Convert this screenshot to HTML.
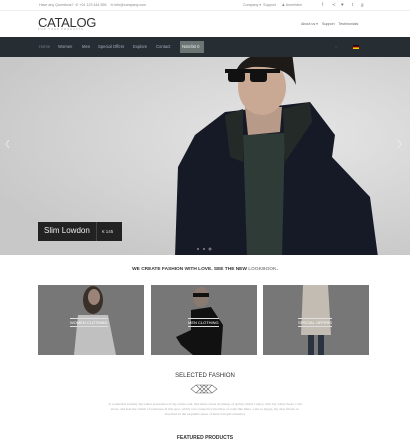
<!DOCTYPE html>
<html><head><meta charset="utf-8"><style>
*{margin:0;padding:0;box-sizing:border-box}
body{width:410px;height:439px;overflow:hidden;background:#fff;font-family:"Liberation Sans",sans-serif;position:relative;color:#444}
.a{position:absolute;white-space:nowrap}
.t{font-size:3.6px;color:#888}
.nav{position:absolute;left:0;top:37px;width:410px;height:20px;background:#262d33}
.nav span{position:absolute;top:7px;font-size:4.2px;color:#aab}
.card{position:absolute;top:285px;width:106px;height:70px;background:#777;overflow:hidden}
.lbl{position:absolute;top:33px;font-size:4px;color:#fff;border-top:.6px solid #ddd;border-bottom:.6px solid #ddd;padding:1px 0;white-space:nowrap}
.so{position:absolute;top:2px;font-size:4.5px;color:#777}
</style></head><body>
<div class="a t" style="left:39px;top:3px">Have any Questions? &nbsp;✆ +01 123 444 555 &nbsp;&nbsp; ✉ info@company.com</div>
<div class="a t" style="left:243px;top:3px">Company ▾ &nbsp;Support &nbsp;&nbsp;&nbsp;&nbsp; ♟ Anmelden</div>
<span class="so" style="left:322px">f</span><span class="so" style="left:332px">≺</span><span class="so" style="left:341px">♥</span><span class="so" style="left:352px">t</span><span class="so" style="left:361px">g</span>
<div style="position:absolute;left:0;top:10px;width:410px;height:.5px;background:#eee"></div>
<div class="a" style="left:38px;top:15px;font-size:13px;color:#333;letter-spacing:-.3px">CATALOG</div>
<div class="a" style="left:38px;top:28px;font-size:2.6px;color:#aaa;letter-spacing:1px">FOR YOUR PRODUCTS</div>
<div class="a t" style="left:301px;top:22px;color:#666">About us ▾ &nbsp;&nbsp; Support &nbsp;&nbsp; Testimonials</div>
<div class="nav">
<span style="left:39px;color:#778">Home</span><span style="left:58px">Women</span><span style="left:82px">Men</span><span style="left:98px">Special Offers</span><span style="left:133px">Explore</span><span style="left:156px">Contact</span>
<div style="position:absolute;left:180px;top:4px;width:24px;height:12px;background:#6c7574"></div><span style="left:182px;color:#eee">Notelist 0</span>
<span style="left:335px;color:#666">○</span>
<div style="position:absolute;left:353px;top:8px;width:6px;height:4px;background:linear-gradient(#111 33%,#c00 33%,#c00 66%,#fc0 66%)"></div>
</div>
<div style="position:absolute;left:0;top:57px;width:410px;height:198px;background:radial-gradient(ellipse at 70% 40%,#e6e6e6,#c8c8c8 80%);overflow:hidden">
<svg width="410" height="198" style="position:absolute;left:0;top:0">
<polygon points="195,78 225,55 310,45 335,78 332,100 370,140 378,200 175,200 178,110" fill="#161926"/>
<polygon points="243,78 285,76 282,200 247,200" fill="#2e3b36"/>
<polygon points="225,58 243,52 243,105 230,100" fill="#232a28"/>
<polygon points="283,52 310,45 312,65 285,105" fill="#232a28"/>
<path d="M245 50 L282 50 L280 75 L248 78Z" fill="#b89a88"/>
<ellipse cx="262" cy="30" rx="24" ry="28" fill="#c9a894"/>
<path d="M236 14 Q245 -8 292 -5 L296 28 Q288 8 252 10Z" fill="#1d1a18"/>
<rect x="225" y="12" width="55" height="4" fill="#111"/>
<rect x="228" y="14" width="17" height="11" rx="3" fill="#111"/>
<rect x="250" y="14" width="17" height="11" rx="3" fill="#111"/>
<path d="M398 83 l3 4 l-3 4" stroke="#eee" fill="none" stroke-width=".8"/>
<path d="M9 83 l-3 4 l3 4" stroke="#eee" fill="none" stroke-width=".8"/>
<circle cx="198" cy="192" r="1" fill="#888"/><circle cx="204" cy="192" r="1" fill="#888"/><circle cx="210" cy="192" r="1.1" fill="none" stroke="#eee" stroke-width=".5"/>
</svg>
<div style="position:absolute;left:38px;top:165px;width:84px;height:19px;background:#222">
<span class="a" style="left:6px;top:4px;font-size:8px;color:#eee">Slim Lowdon</span>
<div style="position:absolute;left:58px;top:0;width:.5px;height:19px;background:#444"></div>
<span class="a" style="left:64px;top:7px;font-size:4.5px;color:#ddd">€ 145</span></div>
</div>
<div class="a" style="left:0;width:410px;text-align:center;top:267px;font-size:4.8px;font-weight:bold;color:#333">WE CREATE FASHION WITH LOVE. SEE THE NEW <span style="color:#888">LOOKBOOK</span>.</div>
<div class="card" style="left:38px"><svg width="106" height="70"><ellipse cx="55" cy="15" rx="10" ry="14" fill="#3a302a"/><ellipse cx="56" cy="12" rx="6" ry="8" fill="#9a8478"/><polygon points="40,30 70,30 78,70 36,70" fill="#c0c0c0"/></svg><div class="lbl" style="left:32px">WOMEN CLOTHING</div></div>
<div class="card" style="left:151px"><svg width="106" height="70"><ellipse cx="50" cy="12" rx="8" ry="10" fill="#8a7a70"/><rect x="42" y="8" width="16" height="4" fill="#111"/><polygon points="40,25 60,22 72,40 70,70 42,70 30,60 25,52 40,45" fill="#111"/></svg><div class="lbl" style="left:37px">MEN CLOTHING</div></div>
<div class="card" style="left:263px"><svg width="106" height="70"><polygon points="40,0 65,0 68,50 38,50" fill="#c2bcb2"/><rect x="45" y="50" width="6" height="20" fill="#2a3440"/><rect x="55" y="50" width="6" height="20" fill="#2a3440"/></svg><div class="lbl" style="left:35px">SPECIAL OFFERS</div></div>
<div class="a" style="left:0;width:410px;text-align:center;top:373px;font-size:6px;color:#333">SELECTED FASHION</div>
<svg class="a" style="left:190px;top:384px" width="28" height="10"><path d="M1 5 L6 1 L22 1 L27 5 L22 9 L6 9Z M6 1 L14 9 M10 1 L18 9 M14 1 L22 9 M6 9 L14 1 M10 9 L18 1 M14 9 L22 1" stroke="#666" stroke-width=".6" fill="none"/></svg>
<div class="a" style="left:0;width:410px;text-align:center;top:402px;font-size:3.5px;line-height:5.2px;color:#aaa;font-family:'Liberation Serif',serif;white-space:normal;padding:0 105px">A wonderful serenity has taken possession of my entire soul, like these sweet mornings of spring which I enjoy with my whole heart. I am alone, and feel the charm of existence in this spot, which was created for the bliss of souls like mine. I am so happy, my dear friend, so absorbed in the exquisite sense of mere tranquil existence</div>
<div class="a" style="left:0;width:410px;text-align:center;top:435px;font-size:5px;font-weight:bold;color:#333">FEATURED PRODUCTS</div>
</body></html>
